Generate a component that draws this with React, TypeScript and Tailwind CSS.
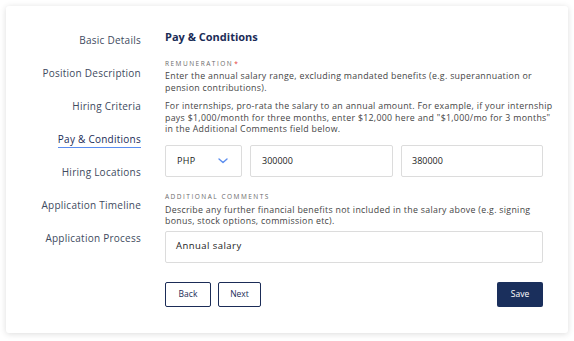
import React from "react";

const navItems = [
  "Basic Details",
  "Position Description",
  "Hiring Criteria",
  "Pay & Conditions",
  "Hiring Locations",
  "Application Timeline",
  "Application Process",
];

export default function App() {
  return (
    <div
      className="w-[574px] h-[341px] bg-white pt-[6px] pl-[6px] overflow-hidden"
      style={{ fontFamily: '"Open Sans", "DejaVu Sans", sans-serif' }}
    >
      <div className="w-[562px] h-[327px] bg-white rounded-[3px] shadow-[0_1px_6px_rgba(0,0,0,0.14)] flex">
        {/* Sidebar */}
        <div className="w-[135px] pt-[17px] flex flex-col">
          {navItems.map((item) => {
            const active = item === "Pay & Conditions";
            return (
              <div key={item} className="h-[33px] flex items-center justify-end">
                <span
                  className={
                    active
                      ? "text-[10px] leading-[14px] tracking-[0.25px] text-[#1b2c57] border-b-[1.5px] border-[#5b8def] pb-[1px] mt-[2px]"
                      : "text-[10px] leading-[14px] tracking-[0.25px] text-[#3e4a5e]"
                  }
                >
                  {item}
                </span>
              </div>
            );
          })}
        </div>

        {/* Main */}
        <div className="ml-[24px] w-[378px] pt-[24px] flex flex-col">
          <h1 className="text-[11px] leading-[14px] font-bold text-[#1b2c57]">Pay &amp; Conditions</h1>

          <div className="mt-[16px] text-[6.5px] leading-[8px] tracking-[1.5px] text-[#6b6b6b] uppercase">
            Remuneration<span className="text-[#e53935] ml-[1px]">*</span>
          </div>
          <p className="mt-[2px] whitespace-nowrap text-[8.8px] leading-[12px] text-[#454545] tracking-[0.3px]">
            Enter the annual salary range, excluding mandated benefits (e.g. superannuation or
            <br />
            pension contributions).
          </p>
          <p className="mt-[7px] whitespace-nowrap text-[8.8px] leading-[11.5px] text-[#454545] tracking-[0.3px]">
            For internships, pro-rata the salary to an annual amount. For example, if your internship
            <br />
            pays $1,000/month for three months, enter $12,000 here and "$1,000/mo for 3 months"
            <br />
            in the Additional Comments field below.
          </p>

          <div className="mt-[9px] flex gap-[8px] h-[32px]">
            <div className="w-[77px] border border-[#dcdcdc] rounded-[2px] flex items-center justify-between pl-[11px] pr-[13px]">
              <span className="text-[9px] text-[#222] tracking-[0.3px]">PHP</span>
              <svg width="10" height="6" viewBox="0 0 10 6" fill="none">
                <path d="M1 1l4 3.5L9 1" stroke="#5b8def" strokeWidth="1.4" strokeLinecap="round" strokeLinejoin="round" />
              </svg>
            </div>
            <div className="flex-1 border border-[#dcdcdc] rounded-[2px] flex items-center pl-[11px]">
              <span className="text-[9px] text-[#222]">300000</span>
            </div>
            <div className="flex-1 border border-[#dcdcdc] rounded-[2px] flex items-center pl-[10px]">
              <span className="text-[9px] text-[#222]">380000</span>
            </div>
          </div>

          <div className="mt-[16px] text-[6.5px] leading-[8px] tracking-[1.5px] text-[#6b6b6b] uppercase">
            Additional Comments
          </div>
          <p className="mt-[4px] whitespace-nowrap text-[8.8px] leading-[11.5px] text-[#454545] tracking-[0.3px]">
            Describe any further financial benefits not included in the salary above (e.g. signing
            <br />
            bonus, stock options, commission etc).
          </p>

          <div className="mt-[3px] h-[32px] border border-[#dcdcdc] rounded-[2px] flex items-center pl-[10px]">
            <span className="text-[9.5px] tracking-[0.45px] text-[#222]">Annual salary</span>
          </div>

          <div className="mt-[19px] flex items-center">
            <button className="w-[46px] h-[25px] border border-[#1b2c57] rounded-[2px] text-[8.5px] text-[#1b2c57] bg-white">
              Back
            </button>
            <button className="ml-[7px] w-[43px] h-[25px] border border-[#1b2c57] rounded-[2px] text-[8.5px] text-[#1b2c57] bg-white">
              Next
            </button>
            <button className="ml-auto w-[46px] h-[25px] rounded-[2px] text-[8.5px] text-white bg-[#1a2f5c]">
              Save
            </button>
          </div>
        </div>
      </div>
    </div>
  );
}
